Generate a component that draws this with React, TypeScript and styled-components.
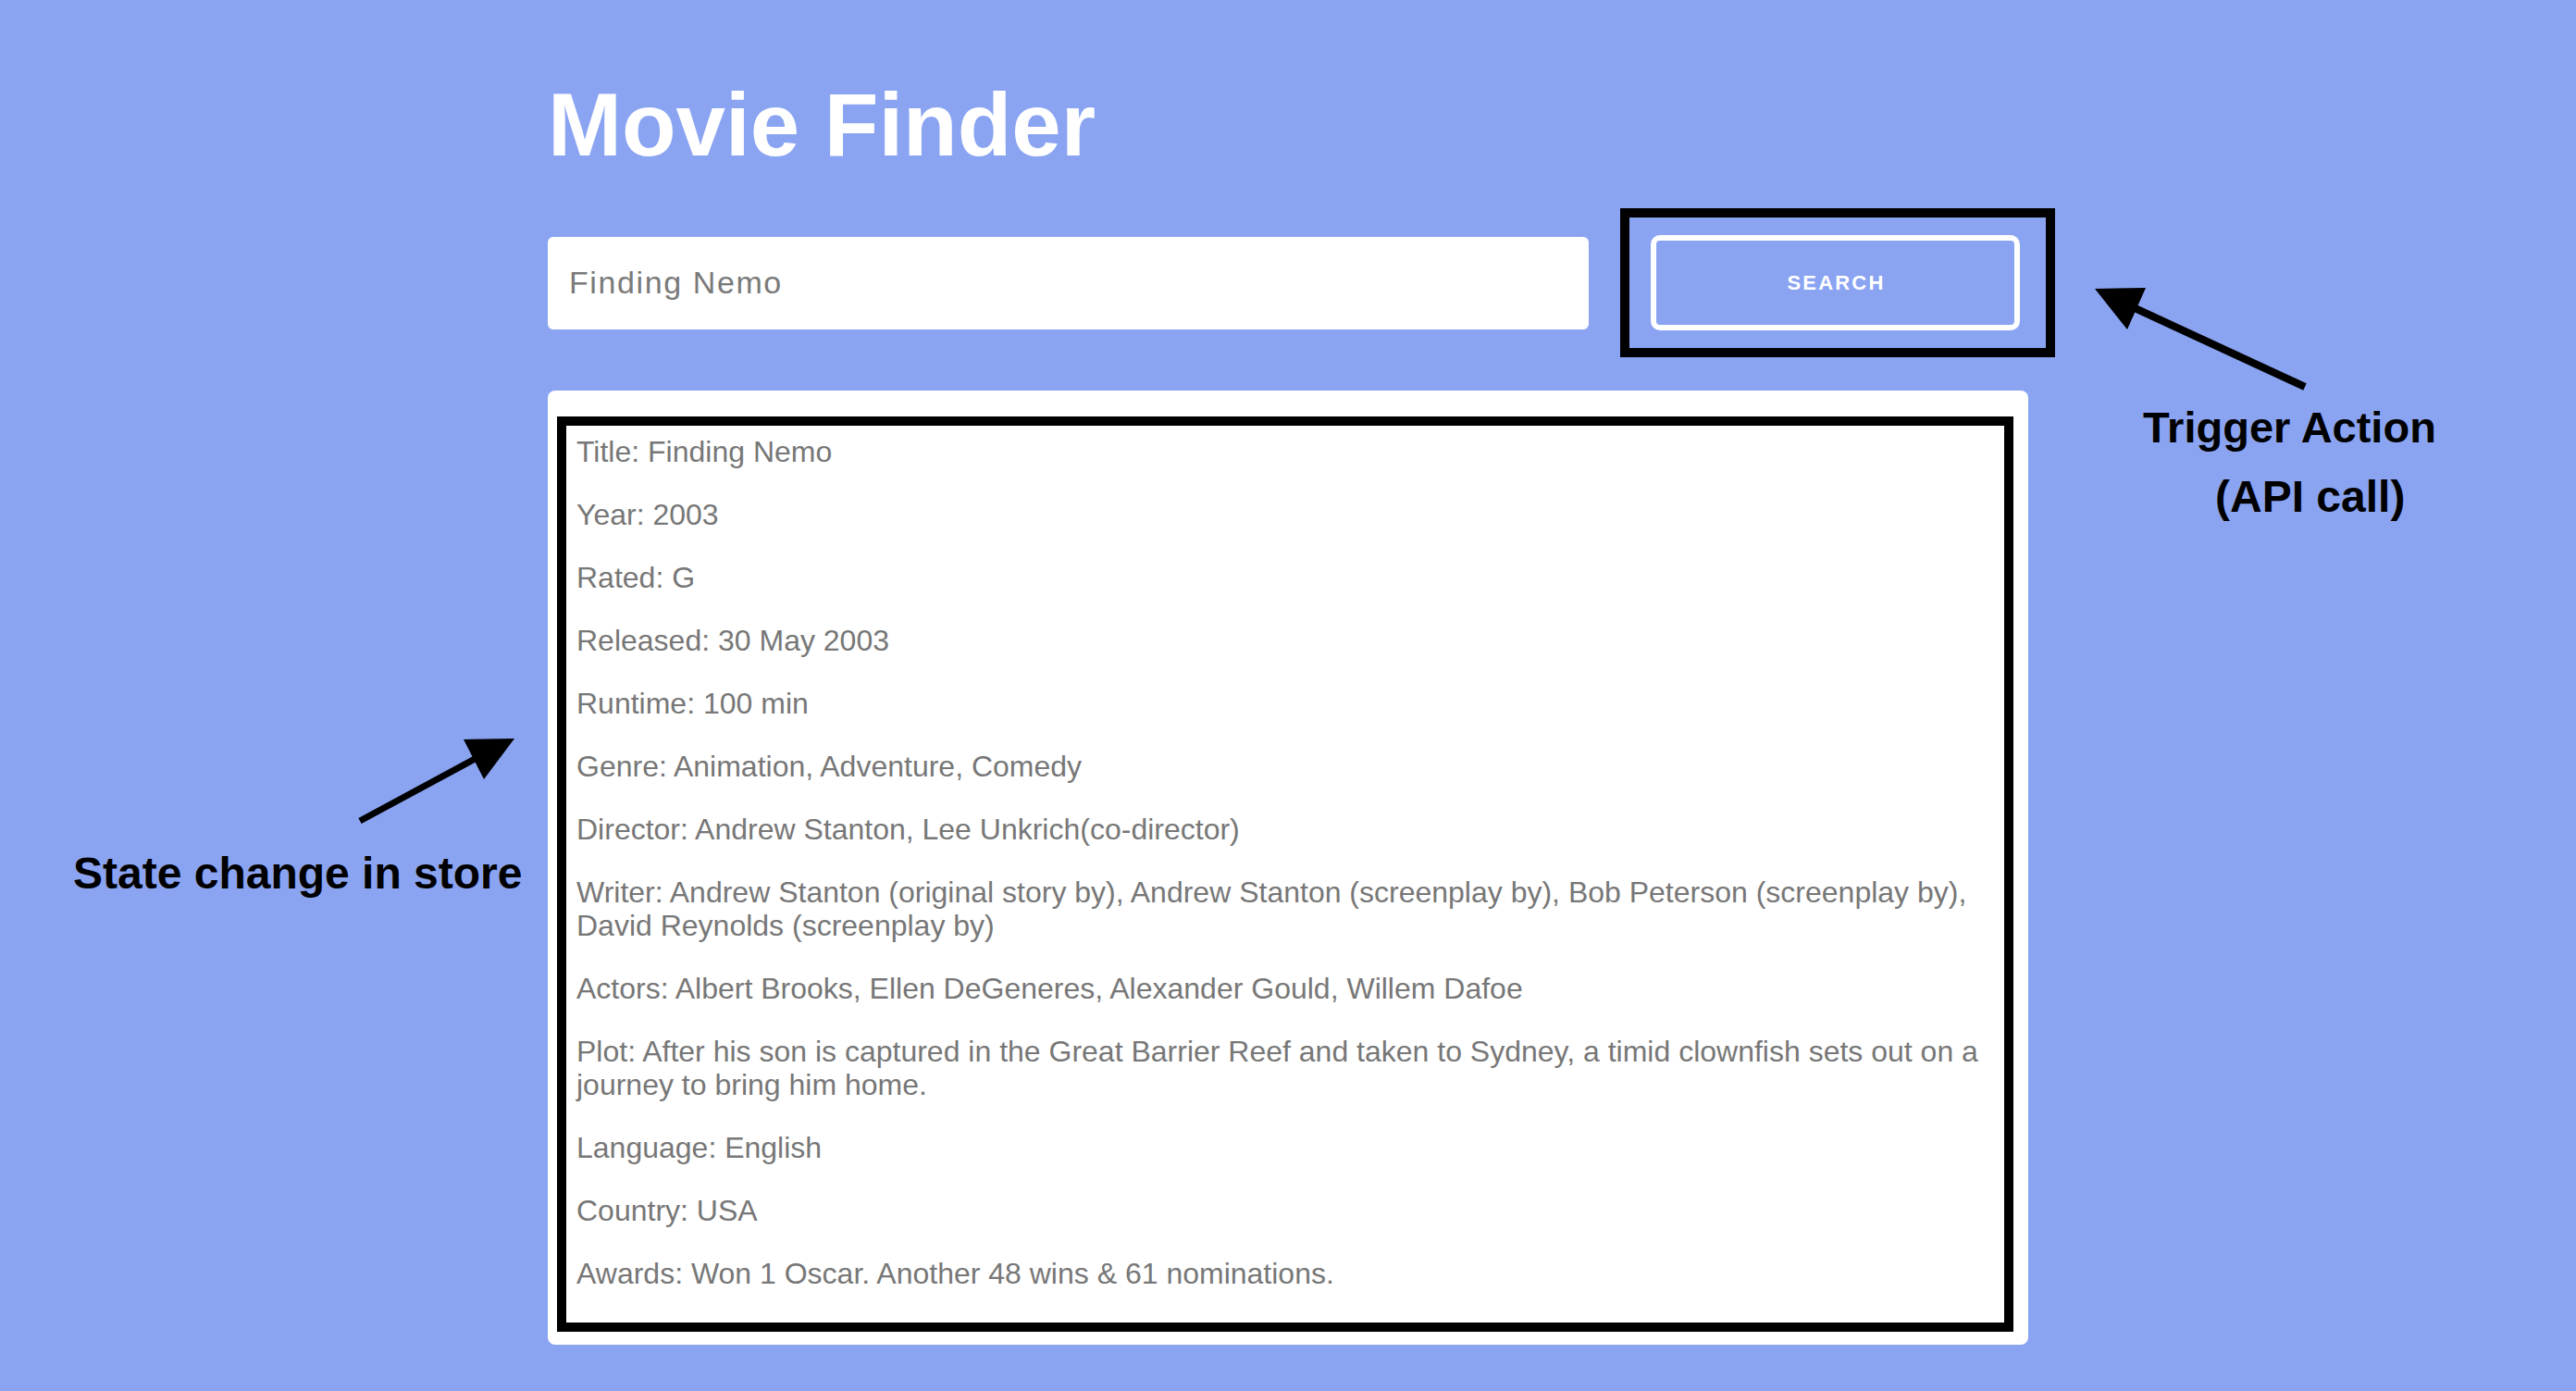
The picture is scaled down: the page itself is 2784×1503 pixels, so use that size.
import React from "react";
import styled, { createGlobalStyle } from "styled-components";

const Global = createGlobalStyle`
  html, body {
    margin: 0;
    padding: 0;
    background: #8aa4f2;
    overflow: hidden;
  }
  body {
    font-family: "Liberation Sans", Arial, Helvetica, sans-serif;
  }
  * { box-sizing: border-box; }
`;

const Page = styled.div`
  position: relative;
  width: 100%;
  min-height: 1503px;
  background: #8aa4f2;
  padding-top: 87px;
`;

const Container = styled.main`
  width: 1600px;
  margin: 0 auto;
  display: flex;
  flex-direction: column;
`;

const Title = styled.h1`
  margin: 0;
  font-size: 96px;
  line-height: 96px;
  font-weight: 700;
  color: #ffffff;
`;

const SearchRow = styled.div`
  margin-top: 71px;
  display: flex;
  align-items: center;
  gap: 67px;
`;

const SearchInput = styled.input`
  width: 1125px;
  height: 100px;
  border: none;
  border-radius: 6px;
  background: #ffffff;
  padding: 0 20px 0 23px;
  font-family: "Liberation Sans", Arial, Helvetica, sans-serif;
  font-size: 34px;
  letter-spacing: 1.6px;
  color: #7a7a7a;
  outline: none;
`;

const ButtonSlot = styled.div`
  position: relative;
  display: flex;
`;

const SearchButton = styled.button`
  width: 399px;
  height: 103px;
  border: 6px solid #ffffff;
  border-radius: 10px;
  background: transparent;
  color: #ffffff;
  font-family: "Liberation Sans", Arial, Helvetica, sans-serif;
  font-weight: 700;
  font-size: 22px;
  letter-spacing: 2.2px;
  display: flex;
  align-items: center;
  justify-content: center;
  padding: 0 0 0 2px;
  cursor: pointer;
`;

const HighlightFrame = styled.div`
  position: absolute;
  inset: -29px -38px -29px -33px;
  border: 10px solid #000000;
  pointer-events: none;
`;

const Card = styled.section`
  margin-top: 65px;
  background: #ffffff;
  border-radius: 8px;
  padding: 28px 16px 14px 10px;
`;

const Details = styled.div`
  border: 10px solid #000000;
  padding: 10px 6px 3px 11px;
`;

const Line = styled.p`
  margin: 0 0 32px;
  font-size: 32px;
  line-height: 36px;
  color: #777777;
`;

const Callout = styled.aside<{ $x: number; $y: number }>`
  position: absolute;
  left: ${(p) => p.$x}px;
  top: ${(p) => p.$y}px;
  display: flex;
  flex-direction: column;
  align-items: flex-start;
  color: #000000;
  font-weight: 700;
  white-space: nowrap;
`;

const Arrow = styled.svg<{ $indent?: number }>`
  display: block;
  margin-left: ${(p) => p.$indent ?? 0}px;
`;

const Caption = styled.div<{ $gap: number; $indent?: number }>`
  display: flex;
  flex-direction: column;
  gap: ${(p) => p.$gap}px;
  margin-left: ${(p) => p.$indent ?? 0}px;
`;

const CaptionLine = styled.span<{ $size: number; $indent?: number }>`
  display: block;
  font-size: ${(p) => p.$size}px;
  line-height: 1;
  padding-left: ${(p) => p.$indent ?? 0}px;
`;

const movie: [string, string][] = [
  ["Title", "Finding Nemo"],
  ["Year", "2003"],
  ["Rated", "G"],
  ["Released", "30 May 2003"],
  ["Runtime", "100 min"],
  ["Genre", "Animation, Adventure, Comedy"],
  ["Director", "Andrew Stanton, Lee Unkrich(co-director)"],
  [
    "Writer",
    "Andrew Stanton (original story by), Andrew Stanton (screenplay by), Bob Peterson (screenplay by), David Reynolds (screenplay by)",
  ],
  ["Actors", "Albert Brooks, Ellen DeGeneres, Alexander Gould, Willem Dafoe"],
  [
    "Plot",
    "After his son is captured in the Great Barrier Reef and taken to Sydney, a timid clownfish sets out on a journey to bring him home.",
  ],
  ["Language", "English"],
  ["Country", "USA"],
  ["Awards", "Won 1 Oscar. Another 48 wins & 61 nominations."],
];

export default function App() {
  return (
    <>
      <Global />
      <Page>
        <Container>
          <Title>Movie Finder</Title>
          <SearchRow>
            <SearchInput defaultValue="Finding Nemo" />
            <ButtonSlot>
              <SearchButton>SEARCH</SearchButton>
              <HighlightFrame />
            </ButtonSlot>
          </SearchRow>
          <Card>
            <Details>
              {movie.map(([k, v]) => (
                <Line key={k}>{`${k}: ${v}`}</Line>
              ))}
            </Details>
          </Card>
        </Container>

        <Callout $x={2250} $y={300}>
          <Arrow width={260} height={130} viewBox="2250 300 260 130">
            <line x1={2491} y1={418} x2={2303} y2={331} stroke="#000" strokeWidth={8} />
            <polygon points="2264,312 2319,311 2299,356" fill="#000" />
          </Arrow>
          <Caption $gap={28} $indent={66} style={{ marginTop: 8 }}>
            <CaptionLine $size={47}>Trigger Action</CaptionLine>
            <CaptionLine $size={48} $indent={78}>(API call)</CaptionLine>
          </Caption>
        </Callout>

        <Callout $x={79} $y={790}>
          <Arrow $indent={301} width={190} height={110} viewBox="380 790 190 110">
            <line x1={389} y1={887} x2={515} y2={819} stroke="#000" strokeWidth={7} />
            <polygon points="556,798 501,799 523,842" fill="#000" />
          </Arrow>
          <Caption $gap={0} style={{ marginTop: 20 }}>
            <CaptionLine $size={48}>State change in store</CaptionLine>
          </Caption>
        </Callout>
      </Page>
    </>
  );
}
